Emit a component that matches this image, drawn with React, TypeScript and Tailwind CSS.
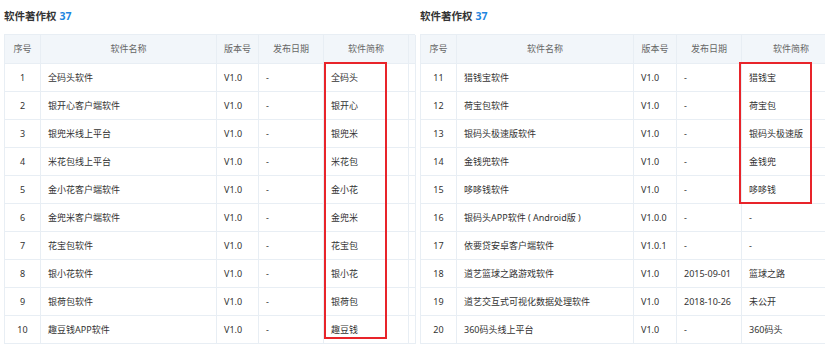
import React from "react";

type Row = { no: number; name: string; ver: string; date: string; short: string };

const left: Row[] = [
  { no: 1, name: "全码头软件", ver: "V1.0", date: "-", short: "全码头" },
  { no: 2, name: "银开心客户端软件", ver: "V1.0", date: "-", short: "银开心" },
  { no: 3, name: "银兜米线上平台", ver: "V1.0", date: "-", short: "银兜米" },
  { no: 4, name: "米花包线上平台", ver: "V1.0", date: "-", short: "米花包" },
  { no: 5, name: "金小花客户端软件", ver: "V1.0", date: "-", short: "金小花" },
  { no: 6, name: "金兜米客户端软件", ver: "V1.0", date: "-", short: "金兜米" },
  { no: 7, name: "花宝包软件", ver: "V1.0", date: "-", short: "花宝包" },
  { no: 8, name: "银小花软件", ver: "V1.0", date: "-", short: "银小花" },
  { no: 9, name: "银荷包软件", ver: "V1.0", date: "-", short: "银荷包" },
  { no: 10, name: "趣豆钱APP软件", ver: "V1.0", date: "-", short: "趣豆钱" },
];

const right: Row[] = [
  { no: 11, name: "猎钱宝软件", ver: "V1.0", date: "-", short: "猎钱宝" },
  { no: 12, name: "荷宝包软件", ver: "V1.0", date: "-", short: "荷宝包" },
  { no: 13, name: "银码头极速版软件", ver: "V1.0", date: "-", short: "银码头极速版" },
  { no: 14, name: "金钱兜软件", ver: "V1.0", date: "-", short: "金钱兜" },
  { no: 15, name: "哆哆钱软件", ver: "V1.0", date: "-", short: "哆哆钱" },
  { no: 16, name: "银码头APP软件 ( Android版 )", ver: "V1.0.0", date: "-", short: "-" },
  { no: 17, name: "依要贷安卓客户端软件", ver: "V1.0.1", date: "-", short: "-" },
  { no: 18, name: "道艺篮球之路游戏软件", ver: "V1.0", date: "2015-09-01", short: "篮球之路" },
  { no: 19, name: "道艺交互式可视化数据处理软件", ver: "V1.0", date: "2018-10-26", short: "未公开" },
  { no: 20, name: "360码头线上平台", ver: "V1.0", date: "-", short: "360码头" },
];

function Table({ rows, cols, extra, box }: { rows: Row[]; cols: string; extra: boolean; box: string }) {
  const cell = "flex items-center border-r border-b border-[#e8eef4] h-[28px]";
  return (
    <div className="relative">
      <div className={`grid ${cols} border-t border-l border-[#e8eef4]`}>
        <div className={`${cell} justify-center bg-[#f2f6fa] text-[#666] h-[29px]`}>序号</div>
        <div className={`${cell} justify-center bg-[#f2f6fa] text-[#666] h-[29px]`}>软件名称</div>
        <div className={`${cell} justify-center bg-[#f2f6fa] text-[#666] h-[29px]`}>版本号</div>
        <div className={`${cell} justify-center bg-[#f2f6fa] text-[#666] h-[29px]`}>发布日期</div>
        <div className={`${cell} justify-center bg-[#f2f6fa] text-[#666] h-[29px]`}>软件简称</div>
        {extra && <div className={`${cell} bg-[#f2f6fa] h-[29px]`} />}
        {rows.map((r) => (
          <React.Fragment key={r.no}>
            <div className={`${cell} justify-center`}>{r.no}</div>
            <div className={`${cell} px-[7px] whitespace-pre`}>{r.name}</div>
            <div className={`${cell} px-[7px]`}>{r.ver}</div>
            <div className={`${cell} px-[7px]`}>{r.date}</div>
            <div className={`${cell} px-[7px] whitespace-nowrap`}>{r.short}</div>
            {extra && <div className={cell} />}
          </React.Fragment>
        ))}
      </div>
      <div className={`absolute top-[28px] border-2 border-[#e8242a] ${box}`} />
    </div>
  );
}

function Title() {
  return (
    <div className="h-[34px] flex items-center text-[10.5px] font-bold text-[#333]">
      软件著作权
      <span className="ml-[3px] text-[#1f86e0]">37</span>
    </div>
  );
}

export default function App() {
  return (
    <div
      className="w-[825px] h-[349px] bg-white overflow-hidden flex text-[9px] text-[#333]"
      style={{ fontFamily: '"Noto Sans", "Noto Sans CJK SC", sans-serif' }}
    >
      <div className="w-[415px] pl-[4px] shrink-0">
        <Title />
        <Table
          rows={left}
          cols="grid-cols-[36px_176px_42px_65px_85px_7px]"
          extra
          box="left-[320px] w-[63px] h-[277px]"
        />
      </div>
      <div className="ml-[5px] w-[420px] shrink-0">
        <Title />
        <Table
          rows={right}
          cols="grid-cols-[36px_177px_43px_65px_99px]"
          extra={false}
          box="left-[319px] w-[73px] h-[142px]"
        />
      </div>
    </div>
  );
}
